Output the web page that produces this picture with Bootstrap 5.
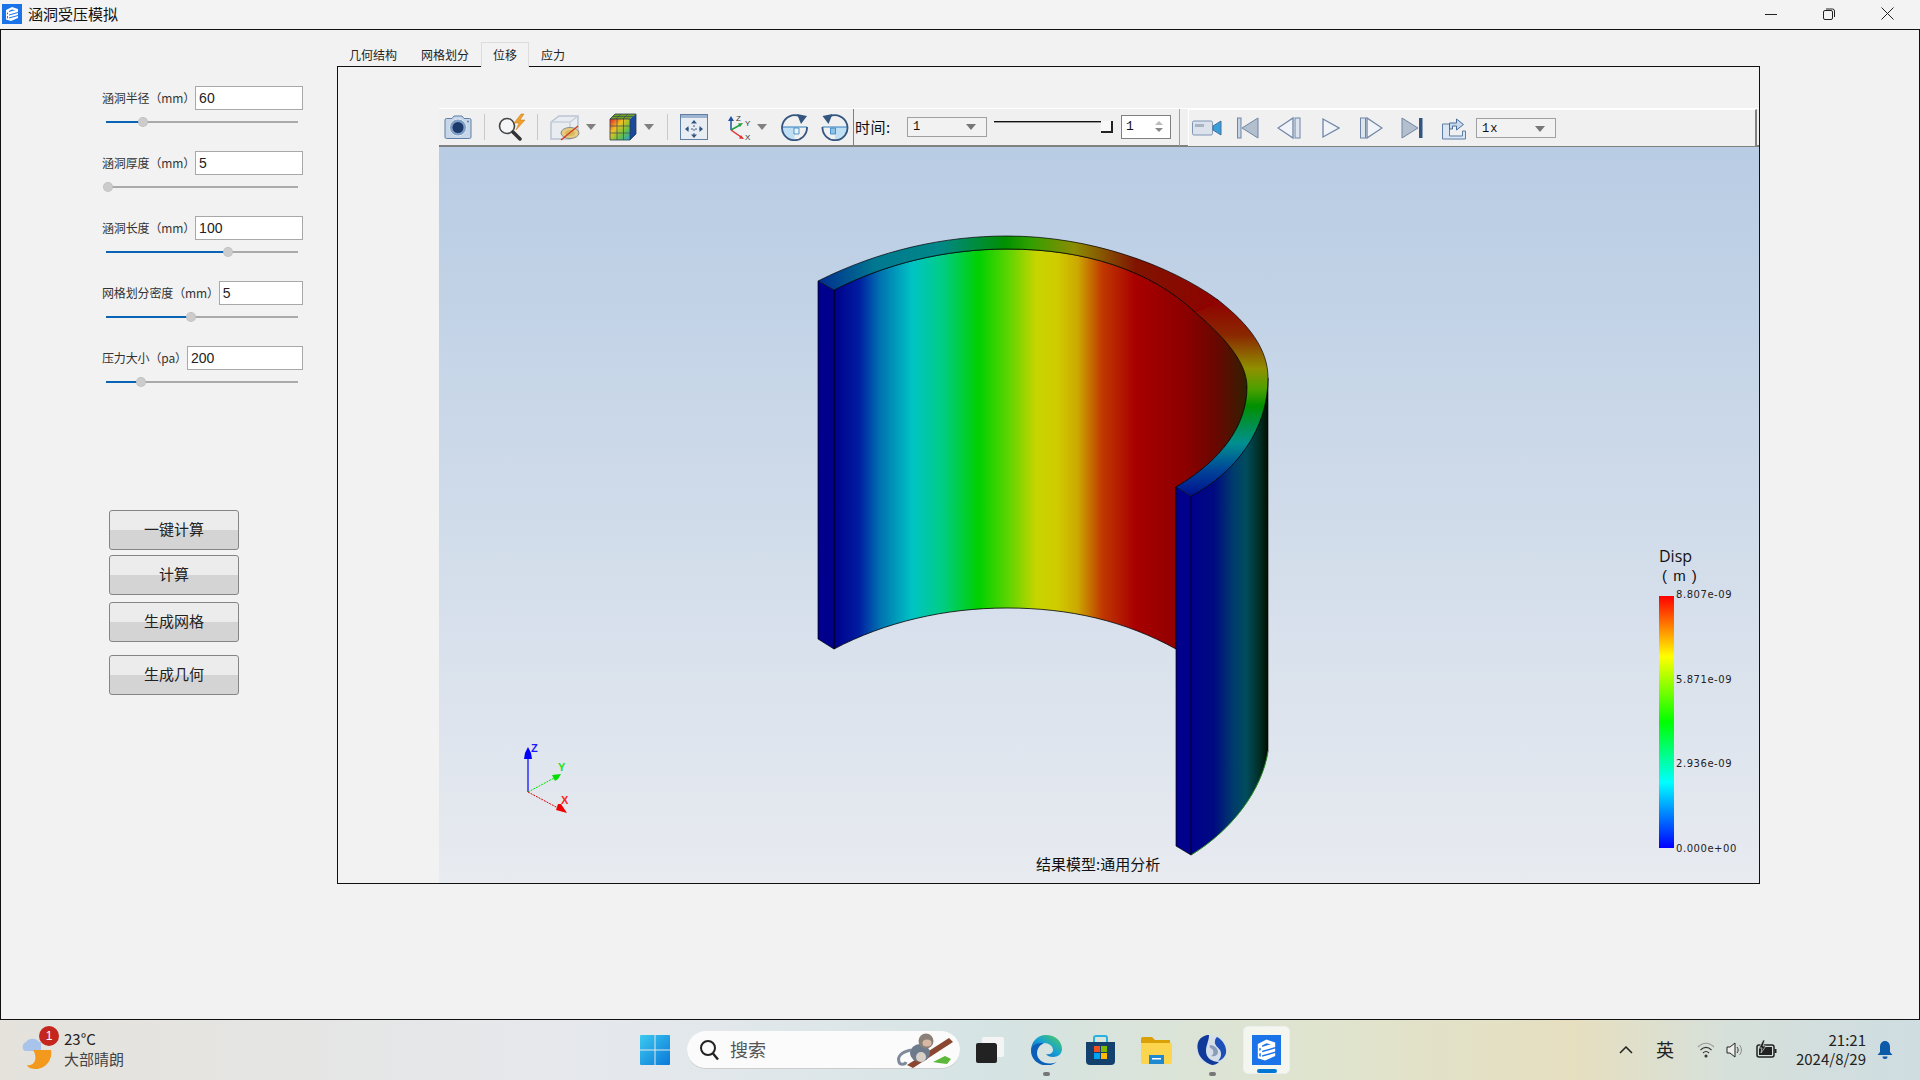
<!DOCTYPE html>
<html lang="zh">
<head>
<meta charset="utf-8">
<title>涵洞受压模拟</title>
<link href="https://cdn.jsdelivr.net/npm/bootstrap@5.3.0/dist/css/bootstrap.min.css" rel="stylesheet">
<script src="https://cdn.jsdelivr.net/npm/bootstrap@5.3.0/dist/js/bootstrap.bundle.min.js"></script>
<style>
html,body{height:100%;overflow:hidden}
body{font-family:"Noto Sans CJK SC","Liberation Sans",sans-serif;font-size:12px;color:#222;background:#f2f2f2;line-height:1.2}
.root{width:1920px;height:1080px}
svg{display:block;flex:none}
.flex-none{flex:none}
.titlebar{height:29px;background:#f3f3f3;padding:0 4px 2px 2px}
.title-text{font-size:15px;margin-left:6px;color:#111}
.winbtns{margin-left:auto}
.winbtn{width:58px;height:27px}
.work{height:991px;border:1px solid #111;background:#f2f2f2}
.sidepane{width:336px;padding-top:56px}
.fields{margin-left:101px;width:201px}
.field{height:65px}
.field-row{height:24px}
.field-label{white-space:nowrap;color:#333;font-size:12px;letter-spacing:-.14px}
.field-input{flex:1;min-width:0;height:24px;border:1px solid #a8a8a8;border-radius:0;padding:0 3px;font:14px "Liberation Sans",sans-serif;color:#222;background:#fff;line-height:22px}
.track{position:relative;height:2px;width:192px;margin:11px 0 0 4px;background:#aaa}
.track-on{height:2px;background:#0a64b4}
.thumb{position:absolute;top:-4px;width:10px;height:10px;margin-left:-5px;border-radius:50%;background:#ccc;border:1px dotted #b8b8b8}
.actions{margin:99px 0 0 108px;width:130px}
.act{display:block;width:130px;height:40px;padding:0 0 2px;border:1px solid #858585;border-radius:3px;font-size:15px;color:#222;background:linear-gradient(#ececec 0,#ececec 51%,#d4d4d4 51%,#d4d4d4 100%);text-align:center}
.act-g5{margin-top:5px}.act-g7{margin-top:7px}.act-g13{margin-top:13px}
.mainpane{padding-top:12px;width:1423px}
.tabstrip{height:24px;border:0;margin:0;flex-wrap:nowrap}
.tabstrip .nav-link{height:24px;padding:4px 11px 0;font-size:12px;line-height:16px;color:#222;border:1px solid transparent;border-bottom:0;border-radius:0;background:transparent;margin:0}
.tabstrip .nav-link.active{border-color:#dcdcdc;background:#f2f2f2;color:#222;margin-bottom:-1px;height:25px;position:relative;z-index:2}
.frame{height:818px;border:1px solid #111;padding:41px 0 0 101px;background:#f2f2f2}
.tools{height:39px;width:1320px;background:#f0f0f0;border-top:1px solid #fff;border-bottom:2px solid #808080;padding-bottom:1px}
.tools svg{height:28px}
.sep{width:1px;height:26px;background:#c8c8c8;flex:none}
.sep-dark{width:1px;height:37px;background:#808080;flex:none;align-self:flex-start}
.sep-mid{width:1px;height:37px;background:#a0a0a0;flex:none;align-self:flex-start}
.drop{width:10px;height:6px;flex:none;border-left:5px solid transparent;border-right:5px solid transparent;border-top:6px solid #808080;box-sizing:border-box}
.m0{margin-left:0}.m1{margin-left:1px}.m2{margin-left:2px}.m4{margin-left:4px}.m5{margin-left:5px}.m6{margin-left:6px}.m7{margin-left:7px}.m8{margin-left:8px}.m10{margin-left:10px}.m12{margin-left:12px}.m13{margin-left:13px}.m14{margin-left:14px}.m15{margin-left:15px}.m16{margin-left:16px}.m17{margin-left:17px}.m18{margin-left:18px}.m20{margin-left:20px}.m21{margin-left:21px}.m24{margin-left:24px}.m26{margin-left:26px}.m29{margin-left:29px}
.time-label{width:50px;font-size:15px;letter-spacing:.5px;color:#111;white-space:nowrap;flex:none}
.combo{width:80px;height:20px;border:1px solid #a0a0a0;background:#f2f2f2;padding:1px 4px 0 5px;font:12px "Liberation Mono",monospace;color:#111;flex:none}
.combo-wide{letter-spacing:1px}
.combo .drop{margin-left:auto;margin-right:6px;border-top-color:#777}
.tslider{width:119px;height:36px;flex:none;align-self:flex-start}
.tline{width:107px;height:1px;margin-top:12px;background:#111;border-bottom:1px solid #999;box-sizing:content-box}
.thandle{width:12px;height:12px;margin-top:12px;border-right:2px solid #222;border-bottom:2px solid #222;background:#f8f8f8}
.spin{width:50px;height:24px;border:1px solid #808080;background:#fff;padding:0 4px;font:13px "Liberation Mono",monospace;color:#111;flex:none}
.spin-arrows{margin-left:auto;margin-right:3px;gap:3px}
.spin-arrows i{display:block;width:0;height:0;border-left:4px solid transparent;border-right:4px solid transparent}
.up{border-bottom:4px solid #bbb}.dn{border-top:4px solid #888}
.tools2{height:37px;width:569px;flex:none;align-self:flex-start;background:#f0f0f0;border-left:1px solid #fff;border-top:1px solid #fff;border-right:2px solid #808080;padding-left:3px}
.view{width:1320px;height:736px;background:linear-gradient(#b8cce4 0,#e8ebf0 100%)}
.taskbar{height:60px;background:linear-gradient(90deg,#e4e2db 0,#e6e8ec 29%,#e0e7ea 40%,#d5e3e3 52%,#dfe4cf 68%,#e6dfc0 82%,#d6e0da 90%,#cfdde2 100%);position:relative}
.weather{width:125px;margin-left:13px}
.wx-text{margin-left:5px;margin-top:-2px;font-size:15px;color:#222;line-height:20px}
.wx-sub{color:#444}
.wx-wrap{position:relative;width:46px;height:44px}
.wx-badge{position:absolute;left:26px;top:-2px;width:20px;height:20px;border-radius:50%;background:#c4261d;color:#fff;font:12px/20px "Liberation Sans",sans-serif;text-align:center}
.winlogo{margin-left:502px}
.searchbox{width:273px;height:38px;margin-left:17px;border-radius:19px;background:#fbfbfb;border-bottom:1px solid #ccc;padding:0 5px 0 12px;font-size:18px;color:#555}
.searchbox span{margin-left:11px}
.searchbox svg:last-child{margin-left:auto}
.appslot{position:relative;height:60px}
.dot{position:absolute;bottom:4px;left:50%;width:7px;height:4px;margin-left:-3px;border-radius:2px;background:#777}
.tile{width:47px;height:48px;background:rgba(255,255,255,.65);border-radius:5px;position:relative;border:1px solid #eee;box-sizing:border-box}
.tile-bar{position:absolute;bottom:0;left:13px;width:20px;height:4px;border-radius:2px;background:#0078d4}
.ime{font-size:18px;color:#222;margin-left:23px}
.clock{width:72px;text-align:right;font-size:15px;line-height:19px;color:#222;margin-left:16px;margin-top:-2px}
.chev{margin-left:329px}
.wifi{margin-left:23px}
.spk{margin-left:11px}
.batt{margin-left:12px}
.bell{margin-left:11px}
</style>
</head>
<body>
<div class="root d-flex flex-column">
  <header class="titlebar d-flex align-items-center">
    <svg width="20" height="20" viewBox="0 0 20 20"><rect width="20" height="20" fill="#1a73e8"/><path d="M4 6 10 3l6 2v2l-6-1.500L7 7v1l3-1 6-1.500V8L7 10.500v1L16 9v2l-9 2.500v1L16 12v2l-7 3-5-1.500zM6 8.500 5 8.800v1.700l1-.3zM6 12l-1 .3v1.900l1 .3z" fill="#fff"/></svg>
    <span class="title-text">涵洞受压模拟</span>
    <div class="winbtns d-flex">
      <div class="winbtn d-flex align-items-center justify-content-center"><svg width="12" height="12" viewBox="0 0 12 12"><path d="M0 6.500h12" stroke="#222" stroke-width="1"/></svg></div>
      <div class="winbtn d-flex align-items-center justify-content-center"><svg width="12" height="12" viewBox="0 0 12 12" fill="none" stroke="#222"><rect x=".5" y="2.500" width="9" height="9" rx="1.500"/><path d="M3 1h6.500a2 2 0 0 1 2 2v6"/></svg></div>
      <div class="winbtn d-flex align-items-center justify-content-center"><svg width="13" height="13" viewBox="0 0 13 13"><path d="M.5.500l12 12M12.500.500l-12 12" stroke="#222" stroke-width="1"/></svg></div>
    </div>
  </header>

  <main class="work d-flex">
    <aside class="sidepane flex-none">
      <div class="fields">
        <div class="field"><div class="field-row d-flex align-items-center"><span class="field-label">涵洞半径（mm）</span><input class="field-input" value="60"></div><div class="track"><div class="track-on" style="width:19.500%"></div><div class="thumb" style="left:19.500%"></div></div></div>
        <div class="field"><div class="field-row d-flex align-items-center"><span class="field-label">涵洞厚度（mm）</span><input class="field-input" value="5"></div><div class="track"><div class="track-on" style="width:0"></div><div class="thumb" style="left:1%"></div></div></div>
        <div class="field"><div class="field-row d-flex align-items-center"><span class="field-label">涵洞长度（mm）</span><input class="field-input" value="100"></div><div class="track"><div class="track-on" style="width:63.500%"></div><div class="thumb" style="left:63.500%"></div></div></div>
        <div class="field"><div class="field-row d-flex align-items-center"><span class="field-label">网格划分密度（mm）</span><input class="field-input" value="5"></div><div class="track"><div class="track-on" style="width:44.500%"></div><div class="thumb" style="left:44.500%"></div></div></div>
        <div class="field"><div class="field-row d-flex align-items-center"><span class="field-label">压力大小（pa）</span><input class="field-input" value="200"></div><div class="track"><div class="track-on" style="width:18%"></div><div class="thumb" style="left:18%"></div></div></div>
      </div>
      <div class="actions">
        <button class="act" type="button">一键计算</button>
        <button class="act act-g5" type="button">计算</button>
        <button class="act act-g7" type="button">生成网格</button>
        <button class="act act-g13" type="button">生成几何</button>
      </div>
    </aside>

    <section class="mainpane">
      <ul class="nav nav-tabs tabstrip">
        <li class="nav-item"><a class="nav-link" href="#">几何结构</a></li>
        <li class="nav-item"><a class="nav-link" href="#">网格划分</a></li>
        <li class="nav-item"><a class="nav-link active" href="#">位移</a></li>
        <li class="nav-item"><a class="nav-link" href="#">应力</a></li>
      </ul>
      <div class="frame">
        <div class="tools d-flex align-items-center">
          <svg class="m5" width="28" height="28" viewBox="0 0 28 28"><path d="M1 7a1.500 1.500 0 0 1 1.500-1.500H8l2-2.500h8l2 2.500h5.500A1.500 1.500 0 0 1 27 7v17a1.500 1.500 0 0 1-1.500 1.500h-23A1.500 1.500 0 0 1 1 24z" fill="#c7d6e8" stroke="#5f7fa6"/><circle cx="14" cy="14.500" r="8.500" fill="#7f9fc4" stroke="#dfe8f2"/><circle cx="14" cy="14.500" r="5.500" fill="#1c3a6c"/><circle cx="24" cy="8.500" r="1" fill="#5f7fa6"/></svg>
          <div class="sep m12"></div>
          <svg class="m12" width="30" height="28" viewBox="0 0 30 28"><circle cx="10" cy="13" r="7.500" fill="#f4f6f8" stroke="#444" stroke-width="1.600"/><path d="M16 19l7 7" stroke="#333" stroke-width="3.500" stroke-linecap="round"/><path d="M24 1l-7 9h5l-3 7 9-10h-5l4-6z" fill="#f0a030" stroke="#c87a10" stroke-width=".5"/></svg>
          <div class="sep m10"></div>
          <svg class="m12" width="30" height="28" viewBox="0 0 30 28" fill="none"><path d="M1 9l8-6h19v17l-8 6H1z" fill="#e9edf2" stroke="#b9c4d2" stroke-width="1.500"/><path d="M1 9h19v17M20 9l8-6" stroke="#c6cfda" stroke-width="1.500"/><ellipse cx="20" cy="20" rx="9" ry="5.500" fill="#e6cc80" stroke="#888"/><ellipse cx="20" cy="20" rx="5" ry="3" fill="#d8b860"/><path d="M11 27 28 13" stroke="#d04020" stroke-width="1.500"/></svg>
          <div class="drop m6"></div>
          <svg class="m13" width="28" height="28" viewBox="0 0 28 28"><defs><linearGradient id="cf" x1="0" y1="0" x2="1" y2="1"><stop offset="0" stop-color="#e82020"/><stop offset=".35" stop-color="#f0c020"/><stop offset=".65" stop-color="#70c040"/><stop offset="1" stop-color="#20a0d0"/></linearGradient></defs><path d="M1 6h20v21H1z" fill="url(#cf)"/><path d="M1 6l5-5h21L21 6z" fill="#70a020"/><path d="M21 6l6-5v20l-6 6z" fill="#1848a0"/><path d="M8 6v21M14.500 6v21M1 13h20M1 20h20M7 6l5-5M14 6l5-5M4 3.500h20M21 13l6-5.500M21 20l6-5.500" stroke="#3a4a5a" stroke-width=".7" fill="none"/><path d="M1 6h20v21H1zM1 6l5-5h21v20l-6 6" fill="none" stroke="#2a3a50" stroke-width=".8"/></svg>
          <div class="drop m7"></div>
          <div class="sep m13"></div>
          <svg class="m12" width="28" height="28" viewBox="0 0 28 28"><rect x=".5" y="1.500" width="27" height="25" fill="#e8edf4" stroke="#5f7fa6"/><rect x="1" y="2" width="26" height="3" fill="#9db4d0"/><path d="M14 8v16M7 16h14" stroke="#3e5f88" stroke-dasharray="2 2"/><path d="M14 7l-3 3.500h6zM14 25l-3-3.500h6zM5 16l3.500-3v6zM23 16l-3.500-3v6z" fill="#33557f"/></svg>
          <svg class="m17" width="32" height="28" viewBox="0 0 32 28"><path d="M6 17V6" stroke="#2050a0" stroke-width="1.500"/><path d="M6 3l-3 5h6z" fill="#2050a0"/><path d="M6 17l9-5" stroke="#20a040" stroke-width="1.500"/><path d="M18 10l-5 .5 2 3.500z" fill="#20a040"/><path d="M6 17l10 7" stroke="#e03030" stroke-width="1.500"/><path d="M19 26l-5-.5 2-3.500z" fill="#e03030"/><text x="11" y="8" font-size="8" fill="#333" font-family="Liberation Sans">Z</text><text x="20" y="13" font-size="8" fill="#333" font-family="Liberation Sans">Y</text><text x="20" y="27" font-size="8" fill="#333" font-family="Liberation Sans">X</text></svg>
          <div class="drop"></div>
          <svg class="m14" width="27" height="28" viewBox="0 0 27 28" fill="none"><path d="M13.500 14H1a12.500 12.500 0 0 0 12.500 12.500z" fill="#bfe0f4"/><path d="M1 14h25" stroke="#2f7fc0"/><path d="M13 15h5v6h-5z" fill="#e8f4fb" stroke="#2f7fc0" stroke-width=".8"/><path d="M19 3.500A12.500 12.500 0 1 0 26 14" stroke="#33557f" stroke-width="1.800"/><path d="M16 1l10 2-6 8z" fill="#33557f"/></svg>
          <svg class="m13" width="28" height="28" viewBox="0 0 27 28" fill="none"><g transform="matrix(-1 0 0 1 27 0)"><path d="M13.500 14H1a12.500 12.500 0 0 0 12.500 12.500z" fill="#bfe0f4"/><path d="M1 14h25" stroke="#2f7fc0"/><path d="M13 15h5v6h-5z" fill="#8cc4e8" stroke="#2f7fc0" stroke-width=".8"/><path d="M19 3.500A12.500 12.500 0 1 0 26 14" stroke="#33557f" stroke-width="1.800"/><path d="M16 1l10 2-6 8z" fill="#33557f"/></g></svg>
          <div class="sep-dark m4"></div>
          <span class="time-label m1">时间:</span>
          <div class="combo m2 d-flex align-items-center"><span>1</span><div class="drop"></div></div>
          <div class="tslider m7 d-flex"><div class="tline"></div><div class="thandle"></div></div>
          <div class="spin m8 d-flex align-items-center"><span>1</span><div class="spin-arrows d-flex flex-column"><i class="up"></i><i class="dn"></i></div></div>
          <div class="sep-mid m8"></div>
          <div class="tools2 m8 d-flex align-items-center">
            <svg width="30" height="28" viewBox="0 0 30 28"><rect x=".5" y="7" width="20" height="14" rx="1.500" fill="#dbe2ec" stroke="#7f96b4"/><rect x="3" y="10" width="9" height="3" fill="#a8b4c4"/><path d="M21 12l8-5v14l-8-5z" fill="#38a0d8" stroke="#4a6f9c"/></svg>
            <svg class="m15" width="22" height="28" viewBox="0 0 22 28"><rect x=".5" y="4" width="3.500" height="20" fill="#c8d4e4" stroke="#6f86a8"/><path d="M21 4v20L5 14z" fill="#b4bfce" stroke="#6f86a8"/></svg>
            <svg class="m18" width="24" height="28" viewBox="0 0 24 28"><path d="M16 4v20L1 14z" fill="#f0f3f7" stroke="#6f86a8" stroke-width="1.300"/><rect x="18" y="4" width="5" height="20" fill="#dde4ee" stroke="#6f86a8"/></svg>
            <svg class="m21" width="18" height="28" viewBox="0 0 18 28"><path d="M1 5v18l16-9z" fill="#f0f3f7" stroke="#6f86a8" stroke-width="1.300"/></svg>
            <svg class="m20" width="23" height="28" viewBox="0 0 23 28"><rect x=".5" y="4" width="5" height="20" fill="#dde4ee" stroke="#6f86a8"/><path d="M7 4v20l15-10z" fill="#f0f3f7" stroke="#6f86a8" stroke-width="1.300"/></svg>
            <svg class="m18" width="22" height="28" viewBox="0 0 22 28"><path d="M1 4v20l16-10z" fill="#b4bfce" stroke="#6f86a8"/><rect x="18" y="4" width="3.500" height="20" fill="#33557f"/></svg>
            <svg class="m18" width="25" height="28" viewBox="0 0 25 28" fill="none"><path d="M1.500 10h7v12h13v-5h3v8H1.500z" fill="#dbe6f2" stroke="#5f7fa6"/><path d="M8.500 15V9h7V5l7 5.500-7 5.500v-4h-4v3z" fill="#c8d9ec" stroke="#4a6f9c"/></svg>
            <div class="combo m10 d-flex align-items-center"><span class="combo-wide">1x</span><div class="drop"></div></div>
          </div>
        </div>
        <div class="view">
          <svg width="1320" height="736" viewBox="439 147 1320 736">
            <defs>
              <linearGradient id="inner" gradientUnits="userSpaceOnUse" x1="834" y1="0" x2="1247" y2="0">
                <stop offset="0" stop-color="#00008c"/><stop offset=".06" stop-color="#001ca0"/><stop offset=".11" stop-color="#0070b0"/><stop offset=".19" stop-color="#00c4c4"/><stop offset=".26" stop-color="#00cc88"/><stop offset=".35" stop-color="#00d000"/><stop offset=".42" stop-color="#5ad400"/><stop offset=".49" stop-color="#c8d400"/><stop offset=".54" stop-color="#d0cc00"/><stop offset=".59" stop-color="#cca800"/><stop offset=".65" stop-color="#c03800"/><stop offset=".73" stop-color="#a80000"/><stop offset=".85" stop-color="#8c0000"/><stop offset=".93" stop-color="#660800"/><stop offset="1" stop-color="#302000"/>
              </linearGradient>
              <linearGradient id="ringTop" gradientUnits="userSpaceOnUse" x1="818" y1="0" x2="1225" y2="0">
                <stop offset="0" stop-color="#002c90"/><stop offset=".14" stop-color="#007890"/><stop offset=".30" stop-color="#008888"/><stop offset=".46" stop-color="#009000"/><stop offset=".52" stop-color="#30a000"/><stop offset=".63" stop-color="#8c8c00"/><stop offset=".78" stop-color="#801400"/><stop offset="1" stop-color="#900000"/>
              </linearGradient>
              <linearGradient id="ringRight" gradientUnits="userSpaceOnUse" x1="0" y1="300" x2="0" y2="496">
                <stop offset="0" stop-color="#900000"/><stop offset=".18" stop-color="#8a2800"/><stop offset=".35" stop-color="#909000"/><stop offset=".45" stop-color="#50a000"/><stop offset=".54" stop-color="#009000"/><stop offset=".73" stop-color="#009090"/><stop offset=".87" stop-color="#004498"/><stop offset="1" stop-color="#001090"/>
              </linearGradient>
              <linearGradient id="outer" gradientUnits="userSpaceOnUse" x1="1191" y1="0" x2="1268" y2="0">
                <stop offset="0" stop-color="#00008c"/><stop offset=".3" stop-color="#000a80"/><stop offset=".55" stop-color="#003c6c"/><stop offset=".72" stop-color="#004c5c"/><stop offset=".88" stop-color="#003028"/><stop offset="1" stop-color="#001000"/>
              </linearGradient>
              <linearGradient id="scale" x1="0" y1="0" x2="0" y2="1">
                <stop offset="0" stop-color="#ff0000"/><stop offset=".24" stop-color="#ffff00"/><stop offset=".5" stop-color="#00ff00"/><stop offset=".74" stop-color="#00ffff"/><stop offset="1" stop-color="#0000ff"/>
              </linearGradient>
            </defs>
            <path d="M1191 496C1235 473 1268 430 1268 378V751C1262 790 1232 830 1191 855Z" fill="url(#outer)" stroke="#000" stroke-width=".6"/>
            <path d="M1268 751C1262 790 1232 830 1191 855" fill="none" stroke="#22a022" stroke-width=".8"/>
            <path d="M834 290C885 264 945 249 1007 249C1085 249 1150 270 1195 312C1230 342 1247 365 1247 387C1247 425 1222 460 1176 487V649C1125 621 1070 608 1007 608C945 608 885 622 834 649Z" fill="url(#inner)" stroke="#000" stroke-width=".8"/>
            <path d="M818 281C880 250 945 236 1007 236C1090 236 1170 265 1218 300L1195 312C1150 270 1085 249 1007 249C945 249 885 264 834 290Z" fill="url(#ringTop)"/>
            <path d="M1218 300C1250 325 1268 350 1268 378C1268 430 1235 473 1191 496L1176 487C1222 460 1247 425 1247 387C1247 365 1230 342 1195 312Z" fill="url(#ringRight)"/>
            <path d="M1218 300L1195 312" stroke="#900000" stroke-width="2" fill="none"/>
            <path d="M818 281C880 250 945 236 1007 236C1090 236 1170 265 1218 300C1250 325 1268 350 1268 378C1268 430 1235 473 1191 496M834 290C885 264 945 249 1007 249C1085 249 1150 270 1195 312C1230 342 1247 365 1247 387C1247 425 1222 460 1176 487" fill="none" stroke="#000" stroke-width=".7"/>
            <path d="M818 281L834 290V649L818 639Z" fill="#00008c" stroke="#000" stroke-width=".7"/>
            <path d="M1176 487L1191 496V855L1176 846Z" fill="#00008c" stroke="#000" stroke-width=".7"/>
            <path d="M528 792V755" stroke="#0000ff" stroke-width="1.200"/>
            <path d="M528 747l-3 6-1 6h8l-1-6z" fill="#0000ff"/>
            <path d="M528 792L556 777" stroke="#00e000" stroke-dasharray="2 1"/>
            <path d="M552 775l3 6 3-2 3-5z" fill="#00e000"/>
            <path d="M528 792L558 808" stroke="#e00000" stroke-dasharray="2 1"/>
            <path d="M556 810l2-6 3 0 6 9z" fill="#f00000"/>
            <text x="531" y="752" font-family="Liberation Sans,sans-serif" font-weight="700" font-size="11" fill="#1a1aff">Z</text>
            <text x="558" y="771" font-family="Liberation Sans,sans-serif" font-weight="700" font-size="11" fill="#20e020">Y</text>
            <text x="561" y="804" font-family="Liberation Sans,sans-serif" font-weight="700" font-size="11" fill="#ff2020">X</text>
            <text x="1659" y="562" font-family="Open Sans,Liberation Sans,sans-serif" font-size="16" fill="#111">Disp</text>
            <text x="1662" y="581" font-family="Liberation Sans,sans-serif" font-size="15" word-spacing="2" fill="#111">( m )</text>
            <rect x="1659" y="596" width="15" height="252" fill="url(#scale)"/>
            <g font-family="DejaVu Sans,sans-serif" font-size="10" letter-spacing=".55" fill="#222">
              <text x="1676" y="598">8.807e-09</text>
              <text x="1676" y="683">5.871e-09</text>
              <text x="1676" y="767">2.936e-09</text>
              <text x="1676" y="852">0.000e+00</text>
            </g>
            <text x="1036" y="870" font-family="Noto Sans CJK SC,sans-serif" font-size="15" fill="#111">结果模型:通用分析</text>
          </svg>
        </div>
      </div>
    </section>
  </main>

  <footer class="taskbar d-flex align-items-center">
    <div class="weather d-flex align-items-center">
      <div class="wx-wrap">
        <svg width="46" height="44" viewBox="0 0 46 44"><path d="M12 23a5 5 0 0 1 1-9 8 8 0 0 1 13 0h2v9z" fill="#a9c4ea"/><path d="M20 22c5 0 12 0 18 0 2 10-6 19-15 19-4 0-8-1-9-4 8 2 11-8 6-15z" fill="#f39a1e"/></svg>
        <div class="wx-badge">1</div>
      </div>
      <div class="wx-text"><div>23°C</div><div class="wx-sub">大部晴朗</div></div>
    </div>
    <svg class="winlogo" width="30" height="30" viewBox="0 0 30 30"><defs><linearGradient id="wl" x1="0" y1="0" x2="1" y2="1"><stop offset="0" stop-color="#3ccaf0"/><stop offset="1" stop-color="#0a78d8"/></linearGradient></defs><path d="M0 1a1 1 0 0 1 1-1h13.500v14.500H0zM15.500 0H29a1 1 0 0 1 1 1v13.500H15.500zM0 15.500h14.500V30H1a1 1 0 0 1-1-1zM15.500 15.500H30V29a1 1 0 0 1-1 1H15.500z" fill="url(#wl)"/></svg>
    <div class="searchbox d-flex align-items-center">
      <svg width="20" height="22" viewBox="0 0 20 22" fill="none"><circle cx="9" cy="9" r="7" stroke="#222" stroke-width="2"/><path d="M14 14.500l5 6" stroke="#222" stroke-width="2.400"/></svg>
      <span>搜索</span>
      <svg width="62" height="36" viewBox="0 0 62 36"><path d="M14 33L56 6l4 4-40 26z" fill="#8a4630"/><path d="M40 30l12-6 6 3-4 5-8-1z" fill="#5cb838"/><ellipse cx="27" cy="21" rx="10" ry="9" fill="#6d7a8c"/><circle cx="33" cy="9" r="7.500" fill="#8b8078"/><ellipse cx="34" cy="11" rx="4.500" ry="3.500" fill="#d8b8a4"/><ellipse cx="28" cy="25" rx="5" ry="5" fill="#d9cfc4"/><path d="M18 18c-9 2-14 6-12 12 1 3 6 3 7 0" fill="none" stroke="#7f8a9a" stroke-width="3"/></svg>
    </div>
    <svg class="m16" width="28" height="26" viewBox="0 0 28 26"><rect x="0" y="6" width="21" height="20" rx="2" fill="#222"/><path d="M6 2a2 2 0 0 1 2-2h18a2 2 0 0 1 2 2v16a2 2 0 0 1-2 2h-5V8a2 2 0 0 0-2-2H6z" fill="#f4f4f4"/></svg>
    <div class="appslot m26 d-flex align-items-center"><svg width="32" height="30" viewBox="0 0 32 30"><defs><linearGradient id="eg" x1="0" y1="1" x2="1" y2="0"><stop offset="0" stop-color="#0c4fa8"/><stop offset=".5" stop-color="#16a0d8"/><stop offset="1" stop-color="#50d050"/></linearGradient></defs><path d="M16 0c9 0 16 6 16 14 0 5-4 8-9 8-3 0-6-1-7-3 4 1 7-1 7-4 0-4-4-7-9-7C7 8 2 12 1 16 1 7 7 0 16 0z" fill="url(#eg)"/><path d="M1 16c0-5 5-8 10-8 2 0 3 .5 3 .5-4 1-7 5-7 10 0 5 5 10 13 10 3 0 6-1 7-2-3 3-7 4-11 4C8 30 1 24 1 16z" fill="#0b5fb8"/></svg><div class="dot"></div></div>
    <div class="appslot m24 d-flex align-items-center"><svg width="29" height="30" viewBox="0 0 29 30"><path d="M8 8V3a2 2 0 0 1 2-2h9a2 2 0 0 1 2 2v5" fill="none" stroke="#28b0e0" stroke-width="2"/><path d="M0 7h29v19a4 4 0 0 1-4 4H4a4 4 0 0 1-4-4z" fill="#14406e"/><rect x="8" y="11" width="6" height="6" fill="#f25022"/><rect x="15" y="11" width="6" height="6" fill="#7fba00"/><rect x="8" y="18" width="6" height="6" fill="#00a4ef"/><rect x="15" y="18" width="6" height="6" fill="#ffb900"/></svg></div>
    <div class="appslot m26 d-flex align-items-center"><svg width="31" height="27" viewBox="0 0 31 27"><path d="M0 2a2 2 0 0 1 2-2h9l3 3h15v6H0z" fill="#d9a008"/><path d="M0 6h31v19a2 2 0 0 1-2 2H2a2 2 0 0 1-2-2z" fill="#fcd54e"/><rect x="8" y="18" width="15" height="9" fill="#1e88d0"/><rect x="11" y="21" width="9" height="1.500" fill="#fff"/></svg></div>
    <div class="appslot m24 d-flex align-items-center"><svg width="31" height="30" viewBox="0 0 31 30"><ellipse cx="15.500" cy="15" rx="15" ry="15" fill="#d6dfe9"/><path d="M11 0C3 2 0 8 2 16c1 6 7 12 14 14 3 0 5-1 7-3-7 0-13-4-13-11 0-6 3-10 3-16z" fill="#0f3a9a"/><path d="M21 2c6 3 10 10 9 16-1 4-4 7-8 8 3-3 4-7 2-11-2-3-6-5-5-9 0-2 1-3 2-4z" fill="#1d4fb8"/><path d="M14 10c5 0 8 4 8 7s-3 5-7 4c3-1 3-5 1-7-2-1-3-2-2-4z" fill="#8a9cb8"/></svg><div class="dot"></div></div>
    <div class="appslot m16 d-flex align-items-center"><div class="tile d-flex align-items-center justify-content-center"><svg width="29" height="30" viewBox="0 0 20 20" preserveAspectRatio="none"><rect width="20" height="20" fill="#1a73e8"/><path d="M4 6 10 3l6 2v2l-6-1.500L7 7v1l3-1 6-1.500V8L7 10.500v1L16 9v2l-9 2.500v1L16 12v2l-7 3-5-1.500zM6 8.500 5 8.800v1.700l1-.3zM6 12l-1 .3v1.900l1 .3z" fill="#fff"/></svg><div class="tile-bar"></div></div></div>
    <svg class="chev" width="14" height="8" viewBox="0 0 14 8"><path d="M1 7l6-6 6 6" fill="none" stroke="#222" stroke-width="1.500"/></svg>
    <span class="ime">英</span>
    <svg width="18" height="16" viewBox="0 0 18 16" fill="none" stroke="#333" stroke-width="1.100" class="wifi"><path d="M1 5c5-5 11-5 16 0" stroke="#999"/><path d="M3.500 8c3.500-3.500 7.500-3.500 11 0"/><path d="M6 11c2-2 4-2 6 0"/><circle cx="9" cy="14" r="1" fill="#333"/></svg>
    <svg width="18" height="18" viewBox="0 0 18 18" fill="none" class="spk"><path d="M1 6h3l5-4v14l-5-4H1z" fill="#eee" stroke="#222"/><path d="M11 6c1.500 2 1.500 4 0 6" stroke="#333"/><path d="M13.500 4c2.500 3 2.500 7 0 10" stroke="#888"/></svg>
    <svg width="22" height="20" viewBox="0 0 22 20" class="batt"><rect x="1" y="5" width="17" height="12" rx="2" fill="none" stroke="#222" stroke-width="1.500"/><rect x="3" y="7" width="13" height="8" fill="#222"/><rect x="18.500" y="9" width="2" height="4" fill="#222"/><path d="M7 0L3 8h3l-1 5 5-7H7l2-6z" fill="#222" stroke="#d8e2e0" stroke-width=".7"/></svg>
    <div class="clock"><div>21:21</div><div>2024/8/29</div></div>
    <svg class="bell" width="16" height="20" viewBox="0 0 16 20"><path d="M8 1c3 0 5 2.500 5 6v5l2.500 3h-15L3 12V7c0-3.500 2-6 5-6z" fill="#0c5ba8"/><path d="M5.500 16.500h5a2.500 2.500 0 0 1-5 0z" fill="#0c5ba8"/></svg>
  </footer>
</div>
</body>
</html>
